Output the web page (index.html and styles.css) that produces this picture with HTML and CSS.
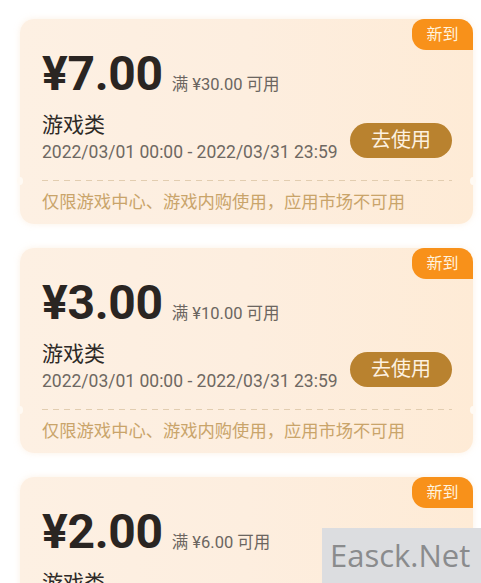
FILE: index.html
```html
<!DOCTYPE html>
<html lang="zh">
<head>
<meta charset="utf-8">
<link rel="stylesheet" href="styles.css">
</head>
<body>
<div class="list">
  <div class="card">
    <div class="badge">新到</div>
    <div class="amount-row"><span class="amount">¥7.00</span><span class="cond">满 ¥30.00 可用</span></div>
    <div class="mid">
      <div class="info">
        <div class="title">游戏类</div>
        <div class="date">2022/03/01 00:00 - 2022/03/31 23:59</div>
      </div>
      <div class="btn">去使用</div>
    </div>
    <div class="dash"></div>
    <div class="note">仅限游戏中心、游戏内购使用，应用市场不可用</div>
  </div>
  <div class="card">
    <div class="badge">新到</div>
    <div class="amount-row"><span class="amount">¥3.00</span><span class="cond">满 ¥10.00 可用</span></div>
    <div class="mid">
      <div class="info">
        <div class="title">游戏类</div>
        <div class="date">2022/03/01 00:00 - 2022/03/31 23:59</div>
      </div>
      <div class="btn">去使用</div>
    </div>
    <div class="dash"></div>
    <div class="note">仅限游戏中心、游戏内购使用，应用市场不可用</div>
  </div>
  <div class="card">
    <div class="badge">新到</div>
    <div class="amount-row"><span class="amount">¥2.00</span><span class="cond">满 ¥6.00 可用</span></div>
    <div class="mid">
      <div class="info">
        <div class="title">游戏类</div>
        <div class="date">2022/03/01 00:00 - 2022/03/31 23:59</div>
      </div>
      <div class="btn">去使用</div>
    </div>
    <div class="dash"></div>
    <div class="note">仅限游戏中心、游戏内购使用，应用市场不可用</div>
  </div>
</div>
<div class="watermark">Easck.Net</div>
</body>
</html>
```
FILE: styles.css
```css
html, body {
  margin: 0;
  padding: 0;
  background: #ffffff;
  height: 583px;
  overflow: hidden;
}
body {
  font-family: Roboto, "Noto Sans CJK SC", sans-serif;
  position: relative;
}
.list {
  display: flex;
  flex-direction: column;
  gap: 24px;
  padding: 19px 8px 0 20px;
}
.card {
  position: relative;
  height: 205px;
  box-sizing: border-box;
  border-radius: 14px;
  background: linear-gradient(90deg, #fdf0e3 0%, #fdeedf 50%, #feebd6 100%);
  box-shadow: 0 0 6px rgba(245, 215, 180, 0.35);
  padding: 31px 21px 0 22px;
}
.card::before, .card::after {
  content: "";
  position: absolute;
  top: 158px;
  width: 6px;
  height: 8px;
  background: #fffaf4;
  border-radius: 50%;
}
.card::before { left: -3px; }
.card::after { right: -3px; }
.badge {
  position: absolute;
  top: 0;
  right: 0;
  width: 61px;
  height: 31px;
  background: #f8911a;
  border-radius: 12px 14px 0 14px;
  color: #fff3df;
  font-size: 16px;
  line-height: 31px;
  text-align: center;
}
.amount-row {
  display: flex;
  align-items: baseline;
  height: 47px;
}
.amount {
  font-size: 48px;
  line-height: 47px;
  font-weight: 700;
  color: #2a2522;
  letter-spacing: -0.3px;
}
.cond {
  margin-left: 9px;
  font-size: 16.5px;
  color: #6b6560;
}
.mid {
  display: flex;
  align-items: center;
  justify-content: space-between;
  margin-top: 15px;
}
.title {
  font-size: 21px;
  line-height: 26px;
  color: #2e2a27;
}
.date {
  font-size: 17.5px;
  line-height: 24px;
  margin-top: 2px;
  color: #6e6862;
}
.btn {
  width: 102px;
  height: 35px;
  margin-top: 4px;
  border-radius: 18px;
  background: #b9822f;
  color: #fdf1e0;
  font-size: 20px;
  line-height: 35px;
  text-align: center;
}
.dash {
  margin-top: 16px;
  height: 1px;
  background: repeating-linear-gradient(90deg, #e2cdb0 0 6px, transparent 6px 11px);
}
.note {
  margin-top: 9px;
  font-size: 17.3px;
  line-height: 24px;
  color: #c9a46a;
}
.watermark {
  position: absolute;
  right: 0;
  top: 528px;
  width: 159px;
  height: 55px;
  background: #dcdde0;
  color: #8a8b8d;
  font-family: "Open Sans", sans-serif;
  font-size: 31px;
  line-height: 55px;
  padding-left: 8px;
  box-sizing: border-box;
}
```
